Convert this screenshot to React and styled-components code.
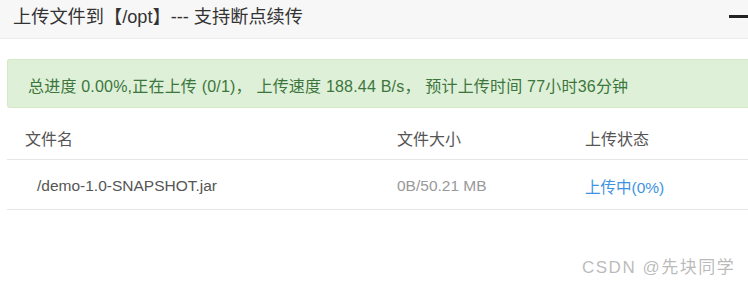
import React from "react";
import styled, { createGlobalStyle } from "styled-components";

const Global = createGlobalStyle`
  html, body { margin: 0; padding: 0; background: #fff; }
  body {
    font-family: "Liberation Sans", "Noto Sans CJK SC", sans-serif;
    color: #555;
  }
`;

const Page = styled.div`
  position: relative;
  width: 748px;
  height: 285px;
  overflow: hidden;
  background: #fff;
`;

const Header = styled.div`
  height: 39px;
  box-sizing: border-box;
  background: #f7f7f7;
  border-bottom: 1px solid #ebebeb;
  display: flex;
  justify-content: space-between;
  align-items: flex-start;
  padding-left: 13px;
`;

const Title = styled.div`
  font-size: 18.2px;
  line-height: 20px;
  margin-top: 7px;
  color: #333;
`;

const Collapse = styled.span`
  display: block;
  width: 19px;
  height: 3px;
  margin-top: 15px;
  background: #222;
`;

const Body = styled.div`
  padding: 20px 0 0 7px;
  display: flex;
  flex-direction: column;
`;

const Alert = styled.div`
  box-sizing: border-box;
  height: 49px;
  background: #dff0d8;
  border: 1px solid #d6e9c6;
  border-right: none;
  border-radius: 3px 0 0 3px;
  color: #3c763d;
  font-size: 16px;
  letter-spacing: 0.2px;
  display: flex;
  align-items: center;
  padding: 3px 0 0 20px;
  white-space: nowrap;
`;

const Table = styled.div`
  margin-top: 8px;
  display: grid;
  grid-template-columns: 372px 188px 1fr;
`;

const Cell = styled.div`
  box-sizing: border-box;
  height: ${(p) => (p.$head ? "44px" : "50px")};
  border-bottom: 1px solid #e6e6e6;
  display: flex;
  align-items: center;
  padding: ${(p) => (p.$head ? "1px 0 0" : "3px 0 0")} ${(p) => (p.$indent ? "30px" : "18px")};
  font-size: ${(p) => (p.$head ? "16px" : "15.5px")};
  color: ${(p) => p.$color || "#555"};
  white-space: nowrap;
`;

const Watermark = styled.div`
  position: absolute;
  left: 582px;
  top: 258px;
  font-size: 17px;
  line-height: 20px;
  color: rgba(140, 140, 140, 0.6);
  white-space: nowrap;
  letter-spacing: 1.5px;
`;

export default function App() {
  return (
    <>
      <Global />
      <Page>
        <Header>
          <Title>上传文件到【/opt】--- 支持断点续传</Title>
          <Collapse />
        </Header>
        <Body>
          <Alert>
            总进度 0.00%,正在上传 (0/1)，&nbsp;上传速度 188.44 B/s，&nbsp;预计上传时间 77小时36分钟
          </Alert>
          <Table>
            <Cell $head>文件名</Cell>
            <Cell $head>文件大小</Cell>
            <Cell $head>上传状态</Cell>
            <Cell $indent>/demo-1.0-SNAPSHOT.jar</Cell>
            <Cell $color="#999">0B/50.21 MB</Cell>
            <Cell $color="#3d93e2">上传中(0%)</Cell>
          </Table>
        </Body>
        <Watermark>CSDN @先块同学</Watermark>
      </Page>
    </>
  );
}
